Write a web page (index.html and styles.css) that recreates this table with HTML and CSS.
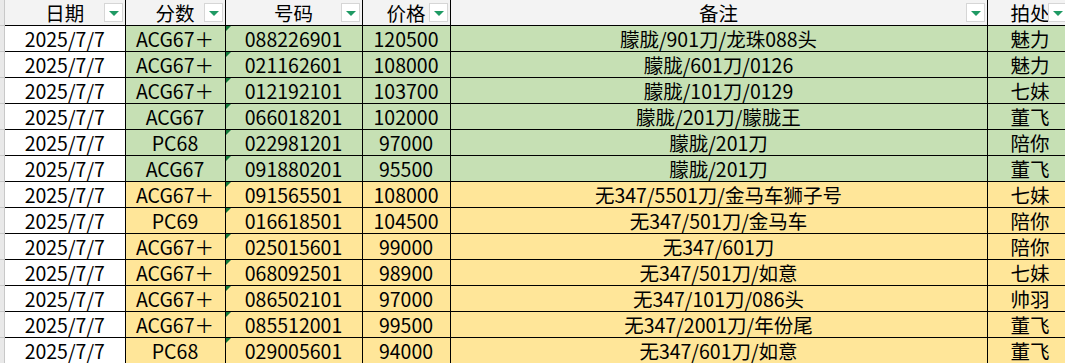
FILE: index.html
```html
<!DOCTYPE html>
<html lang="zh">
<head>
<meta charset="utf-8">
<link rel="stylesheet" href="styles.css">
</head>
<body>
<div class="sheet">
  <div class="rowheads">
    <div class="rh"></div><div class="rh"></div><div class="rh"></div><div class="rh"></div><div class="rh"></div><div class="rh"></div><div class="rh"></div><div class="rh"></div><div class="rh"></div><div class="rh"></div><div class="rh"></div><div class="rh"></div><div class="rh"></div><div class="rh"></div>
  </div>
  <table class="grid">
    <colgroup>
      <col class="c-date"><col class="c-score"><col class="c-num"><col class="c-price"><col class="c-note"><col class="c-place">
    </colgroup>
    <thead>
      <tr>
        <th><span class="h">日期</span><span class="dd"></span></th>
        <th><span class="h">分数</span><span class="dd"></span></th>
        <th><span class="h">号码</span><span class="dd"></span></th>
        <th><span class="h">价格</span><span class="dd"></span></th>
        <th><span class="h">备注</span><span class="dd"></span></th>
        <th><span class="h">拍处</span><span class="dd dd-last"></span></th>
      </tr>
    </thead>
    <tbody>
      <tr class="g"><td class="d">2025/7/7</td><td>ACG67＋</td><td class="t">088226901</td><td>120500</td><td>朦胧/901刀/龙珠088头</td><td>魅力</td></tr>
      <tr class="g"><td class="d">2025/7/7</td><td>ACG67＋</td><td class="t">021162601</td><td>108000</td><td>朦胧/601刀/0126</td><td>魅力</td></tr>
      <tr class="g"><td class="d">2025/7/7</td><td>ACG67＋</td><td class="t">012192101</td><td>103700</td><td>朦胧/101刀/0129</td><td>七妹</td></tr>
      <tr class="g"><td class="d">2025/7/7</td><td>ACG67</td><td class="t">066018201</td><td>102000</td><td>朦胧/201刀/朦胧王</td><td>董飞</td></tr>
      <tr class="g"><td class="d">2025/7/7</td><td>PC68</td><td class="t">022981201</td><td>97000</td><td>朦胧/201刀</td><td>陪你</td></tr>
      <tr class="g"><td class="d">2025/7/7</td><td>ACG67</td><td class="t">091880201</td><td>95500</td><td>朦胧/201刀</td><td>董飞</td></tr>
      <tr class="y"><td class="d">2025/7/7</td><td>ACG67＋</td><td class="t">091565501</td><td>108000</td><td>无347/5501刀/金马车狮子号</td><td>七妹</td></tr>
      <tr class="y"><td class="d">2025/7/7</td><td>PC69</td><td class="t">016618501</td><td>104500</td><td>无347/501刀/金马车</td><td>陪你</td></tr>
      <tr class="y"><td class="d">2025/7/7</td><td>ACG67＋</td><td class="t">025015601</td><td>99000</td><td>无347/601刀</td><td>陪你</td></tr>
      <tr class="y"><td class="d">2025/7/7</td><td>ACG67＋</td><td class="t">068092501</td><td>98900</td><td>无347/501刀/如意</td><td>七妹</td></tr>
      <tr class="y"><td class="d">2025/7/7</td><td>ACG67＋</td><td class="t">086502101</td><td>97000</td><td>无347/101刀/086头</td><td>帅羽</td></tr>
      <tr class="y"><td class="d">2025/7/7</td><td>ACG67＋</td><td class="t">085512001</td><td>99500</td><td>无347/2001刀/年份尾</td><td>董飞</td></tr>
      <tr class="y"><td class="d">2025/7/7</td><td>PC68</td><td class="t">029005601</td><td>94000</td><td>无347/601刀/如意</td><td>董飞</td></tr>
    </tbody>
  </table>
</div>
</body>
</html>
```

FILE: styles.css
```css
html, body {
  margin: 0;
  padding: 0;
  background: #ffffff;
  overflow: hidden;
}

.sheet {
  display: flex;
  align-items: flex-start;
  width: 1065px;
  height: 363px;
  overflow: hidden;
  font-family: "Noto Sans CJK SC", "Noto Sans", sans-serif;
  color: #000;
}

.rowheads {
  flex: 0 0 4px;
  background: #e9e9e9;
  border-right: 1px solid #c8c8c8;
}

.rh {
  height: 25px;
  border-bottom: 1px solid #c8c8c8;
}

.grid {
  border-collapse: collapse;
  table-layout: fixed;
  width: 1068px;
  flex: 0 0 auto;
}

.c-date { width: 120px; }
.c-score { width: 100px; }
.c-num { width: 137px; }
.c-price { width: 88px; }
.c-note { width: 537px; }
.c-place { width: 86px; }

th, td {
  height: 25px;
  padding: 0;
  border: 1px solid #000;
  text-align: center;
  font-size: 19.5px;
  line-height: 25px;
  font-weight: normal;
  white-space: nowrap;
}

thead th {
  background: #f3f3f3;
  border-top: none;
  position: relative;
}

th:first-child, td:first-child {
  border-left: none;
}

.h {
  display: inline-block;
}

.dd {
  position: absolute;
  right: 2px;
  top: 3px;
  width: 19px;
  height: 19px;
  box-sizing: border-box;
  background: #ffffff;
  border: 1px solid #d6d6d6;
}

.dd::after {
  content: "";
  position: absolute;
  left: 4px;
  top: 7px;
  border-left: 5px solid transparent;
  border-right: 5px solid transparent;
  border-top: 5px solid #1f9a64;
}

.dd-last {
  right: 6px;
}

td.d {
  background: #ffffff;
}

tr.g td:not(.d) {
  background: #c6e0b4;
}

tr.y td:not(.d) {
  background: #ffe699;
}

td.t {
  position: relative;
}

td.t::before {
  content: "";
  position: absolute;
  left: 0;
  top: 0;
  border-top: 5px solid #127a3a;
  border-right: 5px solid transparent;
}
```
